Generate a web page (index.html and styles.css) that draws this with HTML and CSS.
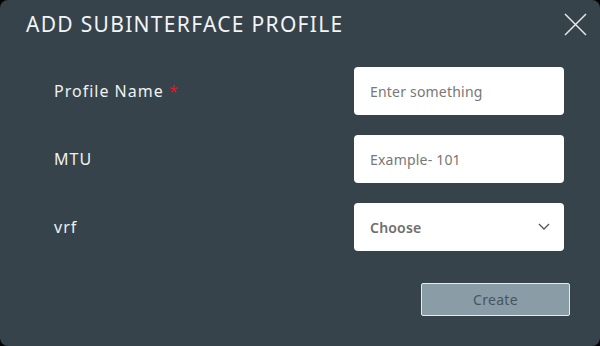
FILE: index.html
```html
<!DOCTYPE html>
<html lang="en">
  <head>
    <meta charset="UTF-8" />
    <meta name="viewport" content="width=device-width, initial-scale=1.0" />
    <title>Add Subinterface Profile</title>
    <link rel="stylesheet" href="styles.css">
  </head>
  <body>
    <div class="modal">
      <div class="modal-header">
        <h2 class="modal-title">ADD SUBINTERFACE PROFILE</h2>
        <button class="close" type="button" aria-label="Close">
          <svg width="23" height="23" viewBox="0 0 23 23">
            <path d="M1 1 L22 22 M22 1 L1 22" stroke="#e4e8ea" stroke-width="1.5" fill="none" />
          </svg>
        </button>
      </div>
      <form class="form">
        <div class="row">
          <label class="label">Profile Name <span class="req">*</span></label>
          <input class="field" type="text" placeholder="Enter something" />
        </div>
        <div class="row">
          <label class="label">MTU</label>
          <input class="field" type="text" placeholder="Example- 101" />
        </div>
        <div class="row">
          <label class="label">vrf</label>
          <div class="field select">
            <span>Choose</span>
            <svg width="12" height="8" viewBox="0 0 12 8">
              <path d="M1 1 L6 6 L11 1" stroke="#555" stroke-width="1.3" fill="none" />
            </svg>
          </div>
        </div>
        <div class="actions">
          <button class="create" type="button">Create</button>
        </div>
      </form>
    </div>
  </body>
</html>
```

FILE: styles.css
```css
body {
  margin: 0;
  padding: 0;
  background: black;
  font-family: "Noto Sans", sans-serif;
}
.modal {
  width: 600px;
  height: 346px;
  box-sizing: border-box;
  background: #36434b;
  border-radius: 8px;
}
.modal-header {
  display: flex;
  align-items: center;
  justify-content: space-between;
  padding: 10px 13px 0 26px;
  height: 28px;
}
.modal-title {
  margin: 0;
  color: #f2f4f5;
  font-size: 21px;
  font-weight: 400;
  letter-spacing: 1.3px;
}
.close {
  background: none;
  border: none;
  padding: 0;
  width: 23px;
  height: 23px;
  cursor: pointer;
}
.form {
  padding: 29px 36px 0 54px;
}
.row {
  display: flex;
  align-items: center;
  justify-content: space-between;
  height: 48px;
  margin-bottom: 20px;
}
.label {
  color: #eef1f2;
  font-size: 16px;
  letter-spacing: 1px;
}
.req {
  color: #d0202f;
}
.field {
  width: 210px;
  height: 48px;
  box-sizing: border-box;
  border: none;
  border-radius: 4px;
  background: white;
  padding: 0 16px;
  font-family: inherit;
  font-size: 14px;
  letter-spacing: 0.2px;
  color: #666;
}
.field::placeholder {
  color: #777;
}
.select {
  display: flex;
  align-items: center;
  justify-content: space-between;
  padding-right: 14px;
  font-weight: 600;
  color: #6e6e6e;
}
.actions {
  display: flex;
  justify-content: flex-end;
  margin-right: -6px;
  margin-top: 32px;
}
.create {
  width: 149px;
  height: 33px;
  background: #8a9ca6;
  border: 1px solid #e6eaec;
  border-radius: 2px;
  color: #46555e;
  font-family: inherit;
  font-size: 14px;
  letter-spacing: 0.3px;
}
```
